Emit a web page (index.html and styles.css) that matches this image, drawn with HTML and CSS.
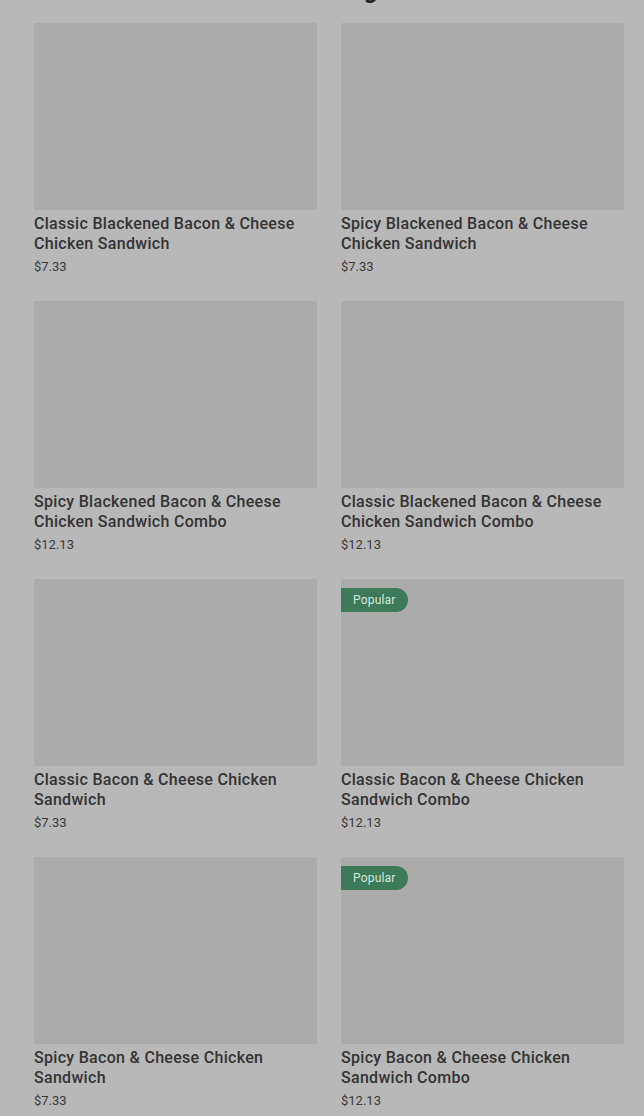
FILE: index.html
```html
<!DOCTYPE html>
<html lang="en">
<head>
    <meta charset="UTF-8">
    <meta name="viewport" content="width=device-width, initial-scale=1.0">
    <title>Chicken Sandwiches</title>
    <link rel="stylesheet" href="styles.css">
</head>
<body>
    <section class="section">
        <h2 class="section-title">Dining</h2>
        <div class="grid">
            <div class="item">
                <div class="thumb"></div>
                <div class="name">Classic Blackened Bacon &amp; Cheese Chicken Sandwich</div>
                <div class="price">$7.33</div>
            </div>
            <div class="item">
                <div class="thumb"></div>
                <div class="name">Spicy Blackened Bacon &amp; Cheese Chicken Sandwich</div>
                <div class="price">$7.33</div>
            </div>
            <div class="item">
                <div class="thumb"></div>
                <div class="name">Spicy Blackened Bacon &amp; Cheese Chicken Sandwich Combo</div>
                <div class="price">$12.13</div>
            </div>
            <div class="item">
                <div class="thumb"></div>
                <div class="name">Classic Blackened Bacon &amp; Cheese Chicken Sandwich Combo</div>
                <div class="price">$12.13</div>
            </div>
            <div class="item">
                <div class="thumb"></div>
                <div class="name">Classic Bacon &amp; Cheese Chicken Sandwich</div>
                <div class="price">$7.33</div>
            </div>
            <div class="item">
                <div class="thumb">
                    <span class="badge">Popular</span>
                </div>
                <div class="name">Classic Bacon &amp; Cheese Chicken Sandwich Combo</div>
                <div class="price">$12.13</div>
            </div>
            <div class="item">
                <div class="thumb"></div>
                <div class="name">Spicy Bacon &amp; Cheese Chicken Sandwich</div>
                <div class="price">$7.33</div>
            </div>
            <div class="item">
                <div class="thumb">
                    <span class="badge">Popular</span>
                </div>
                <div class="name">Spicy Bacon &amp; Cheese Chicken Sandwich Combo</div>
                <div class="price">$12.13</div>
            </div>
        </div>
    </section>
</body>
</html>
```

FILE: styles.css
```css
body {
    margin: 0;
    background-color: #b8b8b8;
    font-family: Roboto, "Liberation Sans", sans-serif;
    color: #2f2f2f;
    overflow: hidden;
}
.section {
    padding: 0 20px 0 34px;
}
.section-title {
    margin: -24px 0 19px;
    font-size: 24px;
    line-height: 28px;
    font-weight: 700;
    text-align: center;
    color: #222;
    padding-left: 28px;
}
.grid {
    display: grid;
    grid-template-columns: 1fr 1fr;
    column-gap: 24px;
    row-gap: 25px;
}
.item {
    display: flex;
    flex-direction: column;
}
.thumb {
    position: relative;
    height: 187px;
    background-color: #ababab;
    border-radius: 2px;
}
.badge {
    position: absolute;
    top: 9px;
    left: 0;
    height: 24px;
    line-height: 24px;
    padding: 0 12px;
    font-size: 12px;
    letter-spacing: 0.2px;
    color: #d8e6de;
    background-color: #3c7a5a;
    border-radius: 0 12px 12px 0;
}
.name {
    margin-top: 4px;
    font-size: 16px;
    line-height: 20px;
    font-weight: 500;
    letter-spacing: 0.3px;
    color: #333;
}
.price {
    margin-top: 4px;
    font-size: 13px;
    line-height: 18px;
    color: #3a3a3a;
}
```
